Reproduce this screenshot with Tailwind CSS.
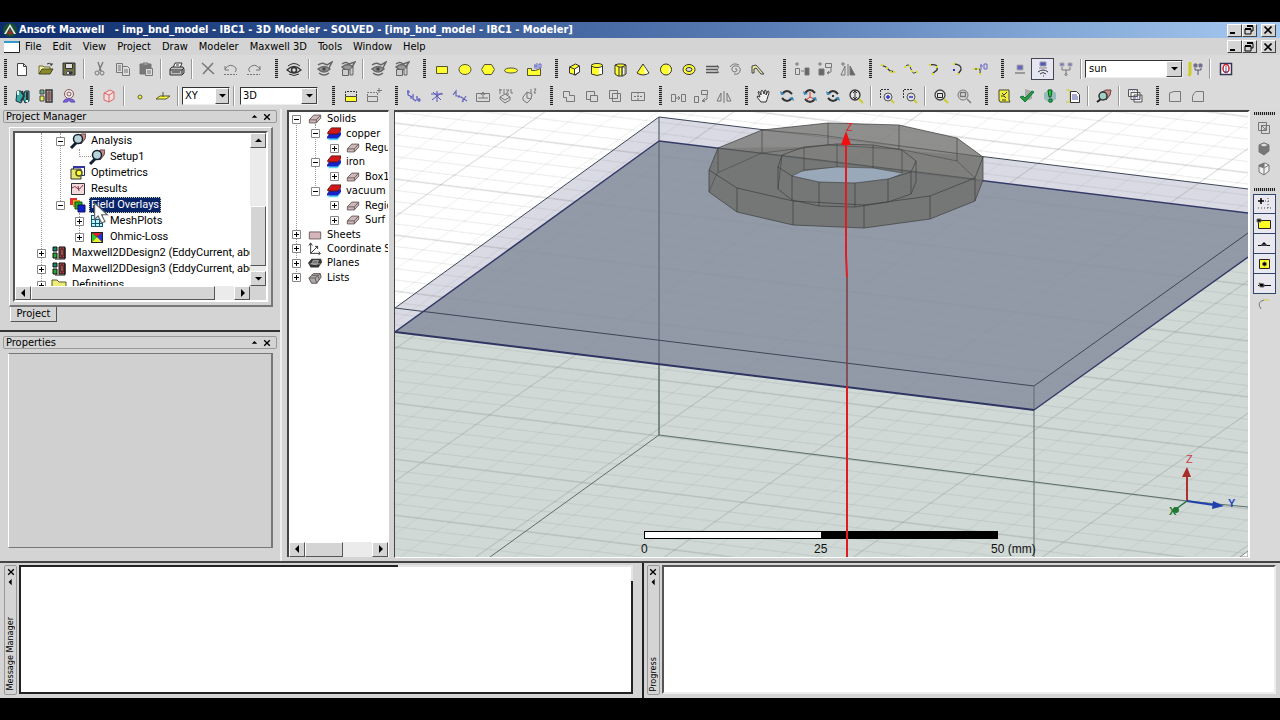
<!DOCTYPE html>
<html lang="en">
  <head>
    <meta charset="UTF-8" />
    <meta name="viewport" content="width=device-width, initial-scale=1.0" />
    <title>Ansoft Maxwell - imp_bnd_model</title>
    <script src="https://cdn.jsdelivr.net/npm/@tailwindcss/browser@4"></script>
  </head>
  <body class="bg-black h-screen flex flex-col overflow-hidden text-black text-[11px] leading-4 font-['DejaVu_Sans_Condensed','DejaVu_Sans',sans-serif]">
    <!-- shared icons -->
    <svg class="hidden">
      <symbol id="plus" viewBox="0 0 9 9"><path d="M.5 .5h8v8h-8z" fill="#fff" stroke="#888" /><path d="M2 4.500h5M4.500 2v5" stroke="#000" /></symbol>
      <symbol id="minus" viewBox="0 0 9 9"><path d="M.5 .5h8v8h-8z" fill="#fff" stroke="#888" /><path d="M2 4.500h5" stroke="#000" /></symbol>
      <symbol id="lens" viewBox="0 0 16 16"><path d="M7 5l4-4h5l-1 5-4 5z" fill="#c98f88" stroke="#644" /><path d="M6 10l-5 5" stroke="#123" stroke-width="3" /><circle cx="8" cy="6" r="4.500" fill="#b9d4d8" stroke="#123" stroke-width="1.500" /></symbol>
      <symbol id="ringlens" viewBox="0 0 16 16"><path d="M6 4l4-2h5l-1 5-4 5z" fill="#c98f88" stroke="#644" /><path d="M5 11l-4 3" stroke="#222" stroke-width="2" /><circle cx="7" cy="8" r="4" fill="#9fd0c8" stroke="#333" stroke-width="1.500" /></symbol>
      <symbol id="design" viewBox="0 0 16 16"><path d="M2 2h4v4H2z" fill="#186" stroke="#111" /><path d="M2 8h4v5H2z" fill="#2a3" stroke="#111" /><path d="M8 2h6v11H8z" fill="#a44" stroke="#111" /><path d="M10 4h2v7h-2z" fill="#d99" stroke="#311" /><path d="M14 3v11H4" stroke="#111" fill="none" /></symbol>
      <symbol id="designgray" viewBox="0 0 16 16"><path d="M2 2h4v4H2z" fill="#6a8" stroke="#444" /><path d="M2 8h4v5H2z" fill="#ee5" stroke="#444" /><path d="M8 2h6v12H8z" fill="#b9a8a4" stroke="#333" stroke-width="1.500" /><path d="M10 4h2v8h-2z" fill="#a77" stroke="#644" /></symbol>
      <symbol id="box" viewBox="0 0 16 16"><path d="M1.500 9l5-5.500h8V7l-5 5.500h-8z" fill="#cdb9b9" stroke="#655" /><path d="M1.500 9h8v3.500M9.500 9l5-5.500" fill="none" stroke="#655" /></symbol>
      <symbol id="mat" viewBox="0 0 16 16"><path d="M1 15l4-5h11l-4 5z" fill="#5cd8f0" /><path d="M0 11l4-5h12v3l-4 4H0z" fill="#1522c8" /><path d="M1 6l4-5h11v3l-4 4H1z" fill="#d01818" stroke="#511" /></symbol>
      <symbol id="min" viewBox="0 0 12 10"><path d="M2 8h5" stroke="#000" stroke-width="2" /></symbol>
      <symbol id="restore" viewBox="0 0 12 10"><path d="M4 1.500h6V6H8M2 4h6v5H2z" fill="none" stroke="#000" /><path d="M4 1h6M2 4h6" stroke="#000" stroke-width="2" /></symbol>
      <symbol id="close" viewBox="0 0 12 10"><path d="M2.500 1.500l7 7M9.500 1.500l-7 7" stroke="#000" stroke-width="1.700" /></symbol>
      <symbol id="eye" viewBox="0 0 16 16"><path d="M1 9q7-7 14 0q-7 6-14 0z" fill="#ddd" stroke="#333" stroke-width="1.300" /><circle cx="8" cy="9" r="2.500" fill="none" stroke="#333" stroke-width="1.500" /><path d="M2 5q6-5 12 0M3 13q5 3 10 0" fill="none" stroke="#333" /></symbol>
      <symbol id="eyex" viewBox="0 0 16 16"><path d="M1 8q6-5 12 0q-6 6-12 0z" fill="#999" stroke="#666" stroke-width="1.500" /><circle cx="7" cy="8" r="2" fill="#444" /><path d="M1 4q4-3 7-1l2 1 5-3-3 6M2 12q5 4 10 0" fill="none" stroke="#666" stroke-width="1.500" /></symbol>
      <symbol id="eyebox" viewBox="0 0 16 16"><path d="M2 6q6-5 11 0q-5 6-11 0z" fill="#999" stroke="#666" stroke-width="1.500" /><path d="M2 3q4-3 7 0l6-2-3 5" fill="none" stroke="#666" stroke-width="1.500" /><path d="M2.500 8.500h6v6h-6zM10 8v6h3V7" fill="#ccc" stroke="#666" /></symbol>
      <symbol id="up" viewBox="0 0 9 9"><path d="M1 6h7L4.500 2.500z" /></symbol>
      <symbol id="down" viewBox="0 0 9 9"><path d="M1 3h7L4.500 6.500z" /></symbol>
      <symbol id="left" viewBox="0 0 9 9"><path d="M6 0v8L2 4z" /></symbol>
      <symbol id="right" viewBox="0 0 9 9"><path d="M3 0v8l4-4z" /></symbol>
    </svg>

    <main class="mt-[22px] mb-[22px] flex-1 min-h-0 flex flex-col bg-[#d4d4d4]">
      <!-- title bar -->
      <header class="h-4 shrink-0 flex items-center gap-[2px] pl-[3px] pr-1 text-white bg-linear-to-r from-[#0e2d6e] via-[#5a7db5] via-60% to-[#a6caf0]">
        <svg class="w-[14px] h-[14px]" viewBox="0 0 14 14"><circle cx="7" cy="7" r="7" fill="#174f35" /><path d="M7 1l6 10h-2L7 4l-4 7H1z" fill="#e8eee8" /><path d="M5 11V9M7 12V6M9 11V9" stroke="#d22" stroke-width="1.200" /></svg>
        <h1 class="flex-1 whitespace-pre font-bold">Ansoft Maxwell   - imp_bnd_model - IBC1 - 3D Modeler - SOLVED - [imp_bnd_model - IBC1 - Modeler]</h1>
        <div class="flex [&>button]:w-[15px] [&>button]:h-[13px] [&>button]:bg-[#d4d4d4] [&>button]:border [&>button]:border-white [&>button]:border-r-[#444] [&>button]:border-b-[#444] [&_svg]:w-3 [&_svg]:h-[10px]">
          <button aria-label="Minimize"><svg><use href="#min" /></svg></button>
          <button aria-label="Restore"><svg><use href="#restore" /></svg></button>
          <button class="ml-1" aria-label="Close"><svg><use href="#close" /></svg></button>
        </div>
      </header>

      <!-- menu -->
      <nav class="h-[17px] shrink-0 flex items-center pl-1 pr-1">
        <svg class="w-4 h-3 mr-[5px]" viewBox="0 0 16 12"><path d="M0 0h16v12H0z" fill="#fff" /><path d="M0 1h16" stroke="#39c" stroke-width="2" /><path d="M15.500 0v11.500H0" fill="none" stroke="#222" /></svg>
        <div class="flex-1 flex gap-[11px]">
          <button>File</button><button>Edit</button><button>View</button><button>Project</button><button>Draw</button><button>Modeler</button><button>Maxwell 3D</button><button>Tools</button><button>Window</button><button>Help</button>
        </div>
        <div class="flex [&>button]:w-[15px] [&>button]:h-[13px] [&>button]:bg-[#d4d4d4] [&>button]:border [&>button]:border-white [&>button]:border-r-[#444] [&>button]:border-b-[#444] [&_svg]:w-3 [&_svg]:h-[10px]">
          <button aria-label="Minimize window"><svg><use href="#min" /></svg></button>
          <button aria-label="Restore window"><svg><use href="#restore" /></svg></button>
          <button class="ml-1" aria-label="Close window"><svg><use href="#close" /></svg></button>
        </div>
      </nav>

      <!-- toolbars: i is a grip, hr a separator -->
      <div class="shrink-0 bg-[#dadada] flex flex-col [&>div]:h-[27px] [&>div]:flex [&>div]:gap-[10px] [&>div]:pl-1 [&>div>div]:flex [&>div>div]:items-center [&_button]:w-[23px] [&_button]:h-[22px] [&_button]:flex [&_button]:items-center [&_button]:justify-center [&_button>svg]:size-4 [&_button>svg]:fill-none [&_button>svg]:stroke-[#777] [&_i]:w-[3px] [&_i]:h-[19px] [&_i]:mr-1 [&_i]:bg-[repeating-linear-gradient(#222_0_1px,#bbb_1px_2px)] [&_hr]:w-0 [&_hr]:h-5 [&_hr]:mx-[3px] [&_hr]:border-0 [&_hr]:border-l [&_hr]:border-r [&_hr]:border-l-[#999] [&_hr]:border-r-white [&_hr]:box-content">
        <div>
          <div>
            <i></i>
            <button aria-label="New"><svg viewBox="0 0 16 16"><path d="M2.500 2.500h6l3 3v9h-9z" fill="#fff" stroke="#444" /><path d="M8.500 2.500v3h3" stroke="#444" /></svg></button>
            <button aria-label="Open"><svg viewBox="0 0 16 16"><path d="M1 13V5h4l1 1h6v2" fill="#f5f3a0" stroke="#663" /><path d="M1 13l3-5h11l-3 5z" fill="#8a8a28" stroke="#442" /><path d="M9 3q3-2 5 1m0-2v2h-2" stroke="#333" /></svg></button>
            <button aria-label="Save"><svg viewBox="0 0 16 16"><path d="M2 2h12v12H2z" fill="#6f7038" stroke="#333" /><path d="M4.500 2.500h7v5h-7z" fill="#ddd" stroke="#333" /><path d="M5 10h7v4H5z" fill="#333" /><path d="M6 11h2v2H6z" fill="#ddd" stroke="none" /></svg></button>
            <hr />
            <button aria-label="Cut"><svg viewBox="0 0 16 16"><path d="M6 1l3 9M11 1L7 10" stroke-width="1.300" /><circle cx="5" cy="12" r="2" /><circle cx="10" cy="12" r="2" /></svg></button>
            <button aria-label="Copy"><svg viewBox="0 0 16 16"><path d="M1.500 2.500h6v9h-6zM3 5h3M3 7h3M3 9h3" /><path d="M7.500 5.500h5l2 2v7h-7z" fill="#ddd" /><path d="M9 9h4M9 11h4" /></svg></button>
            <button aria-label="Paste"><svg viewBox="0 0 16 16"><path d="M2 3h11v10H2z" fill="#777" /><path d="M5 2h5v2H5z" fill="#bbb" /><path d="M7.500 7.500h7v7h-7z" fill="#ddd" /><path d="M9 10h4M9 12h4" /></svg></button>
            <hr />
            <button aria-label="Print"><svg viewBox="0 0 16 16"><path d="M4 7l2-5h7l-2 5z" fill="#fff" stroke="#333" /><path d="M1 8l2-2h11l1 2v4l-2 2H1z" fill="#bbb" stroke="#333" /><path d="M1 9h12v4M3 11h8M13 9l2-2M7 4h3" stroke="#333" /></svg></button>
            <hr />
            <button aria-label="Delete"><svg viewBox="0 0 16 16"><path d="M2 2l12 11M13 2L3 13" stroke-width="1.500" /></svg></button>
            <button aria-label="Undo"><svg viewBox="0 0 16 16"><path d="M2 9V5m0 4h4M2 8q5-7 11-1q1 2-1 4" /><path d="M1 13.500h13" stroke-dasharray="2 1" /></svg></button>
            <button aria-label="Redo"><svg viewBox="0 0 16 16"><path d="M14 9V5m0 4h-4M14 8Q9 1 3 7q-1 2 1 4" /><path d="M1 13.500h13" stroke-dasharray="2 1" /></svg></button>
          </div>
          <div>
            <i></i>
            <button aria-label="Show all"><svg><use href="#eye" /></svg></button>
            <hr />
            <button aria-label="Hide selected"><svg><use href="#eyex" /></svg></button>
            <button aria-label="Hide in active view"><svg><use href="#eyebox" /></svg></button>
            <hr />
            <button aria-label="Show selected"><svg><use href="#eyex" /></svg></button>
            <button aria-label="Show in active view"><svg><use href="#eyebox" /></svg></button>
          </div>
          <div>
            <i></i>
            <button aria-label="Rectangle"><svg viewBox="0 0 16 16"><path d="M2.500 5.500h11v7h-11z" fill="#ffff30" stroke="#553" /></svg></button>
            <button aria-label="Circle"><svg viewBox="0 0 16 16"><ellipse cx="8" cy="8.500" rx="6" ry="5" fill="#ffff30" stroke="#553" /></svg></button>
            <button aria-label="Polygon"><svg viewBox="0 0 16 16"><path d="M1.500 8.500l3-5h7l3 5-3 5h-7z" fill="#ffff30" stroke="#553" /></svg></button>
            <button aria-label="Ellipse"><svg viewBox="0 0 16 16"><ellipse cx="8" cy="9.500" rx="6.500" ry="2.500" fill="#ffff30" stroke="#553" /></svg></button>
            <button aria-label="Equation surface"><svg viewBox="0 0 16 16"><path d="M1.500 7.500h4v2h4l5-2v7h-13z" fill="#ffff30" stroke="#553" /><path d="M9 3v5M8 5h3M11 2v6M13 3v4h2V3z" stroke="#66c" /></svg></button>
          </div>
          <div class="mr-1">
            <i></i>
            <button aria-label="Box"><svg viewBox="0 0 16 16"><path d="M3.500 6l6-3 4 2v6l-4 3-6-2z" fill="#ffff30" stroke="#333" /><path d="M8.500 8l5-3v6l-5 3z" fill="#fff" stroke="#333" /><path d="M3.500 6l5 2" stroke="#333" /></svg></button>
            <button aria-label="Cylinder"><svg viewBox="0 0 16 16"><path d="M2.500 4v9q5.500 3 11 0V4z" fill="#ffff30" stroke="#333" /><path d="M10 5h3v8h-3z" fill="#fff" stroke="none" /><ellipse cx="8" cy="4.500" rx="5.500" ry="2" fill="#ffff30" stroke="#333" /></svg></button>
            <button aria-label="Regular polyhedron"><svg viewBox="0 0 16 16"><path d="M3 4l3-1h5l3 1v9l-3 2H6l-3-2z" fill="#ffff30" stroke="#333" /><path d="M10 6h3v7l-3 2z" fill="#eee" /><path d="M3 4l4 2h3l4-2M7 6v9M10 6v9" stroke="#333" /></svg></button>
            <button aria-label="Cone"><svg viewBox="0 0 16 16"><path d="M8 3l6 9q-6 4-12 0z" fill="#ffff30" stroke="#333" /><path d="M9 5l4 7-3 1z" fill="#fff" stroke="none" /></svg></button>
            <button aria-label="Sphere"><svg viewBox="0 0 16 16"><circle cx="8" cy="8.500" r="5.500" fill="#ffff30" stroke="#333" /><path d="M10 5q3 4-1 8q6-3 1-8" fill="#fff" stroke="none" /></svg></button>
            <button aria-label="Torus"><svg viewBox="0 0 16 16"><ellipse cx="8" cy="8.500" rx="6" ry="5" fill="#ffff30" stroke="#333" /><ellipse cx="8" cy="8.500" rx="3" ry="2" fill="#ddd" stroke="#333" /></svg></button>
            <button aria-label="Helix"><svg viewBox="0 0 16 16"><path d="M2 5.500h12M2 8.500h12M2 11.500h12" stroke="#555" stroke-width="1.500" /><path d="M13 4l2 2-2 3 2 3" stroke="#777" /></svg></button>
            <button aria-label="Spiral"><svg viewBox="0 0 16 16"><path d="M8 8q2-1 2 1t-3 2q-3-1-2-4t5-2q4 1 3 5t-6 3M3 6q3-5 9-2" /></svg></button>
            <button aria-label="Bondwire"><svg viewBox="0 0 16 16"><path d="M2 12V5l4-1 8 9h-3L6 7l-2 1v4z" fill="#e8e8a0" stroke="#444" /></svg></button>
          </div>
          <div>
            <i></i>
            <button aria-label="Duplicate along line"><svg viewBox="0 0 16 16"><path d="M3 1v4M1 3h4M1.500 7.500h4v6h-4zM7 10h3" /><path d="M11 7h4v7h-4z" fill="#666" /></svg></button>
            <button aria-label="Duplicate around axis"><svg viewBox="0 0 16 16"><path d="M3 1v4M1 3h4M8.500 2.500h6v4h-6zM14 7v4l-4 1m2-2l-2 2 2 1" /><path d="M2 8h5v6H2z" fill="#666" /></svg></button>
            <button aria-label="Duplicate mirror"><svg viewBox="0 0 16 16"><path d="M3 1v4M1 3h4M5 5v9H1zM8 3v12" /><path d="M10 5v9h5z" fill="#666" /></svg></button>
          </div>
          <div>
            <i></i>
            <button aria-label="Line"><svg viewBox="0 0 16 16"><path d="M1 4l5 2 4 4 5 1" stroke="#333" stroke-width="1.300" /><path d="M1 4h2M6 7h2M10 11h2M13 11h2" stroke="#dd2" stroke-width="2" /></svg></button>
            <button aria-label="Spline"><svg viewBox="0 0 16 16"><path d="M2 6q4-5 6 2t6 2" stroke="#333" /><path d="M1 6h2M6 5h2M8 10h2M13 11h2" stroke="#dd2" stroke-width="2" /></svg></button>
            <button aria-label="Arc by three points"><svg viewBox="0 0 16 16"><path d="M3 4q10-2 8 5l-5 4" stroke="#333" stroke-width="1.300" /><path d="M3 4h2M10 6h2M6 13h2" stroke="#dd2" stroke-width="2" /></svg></button>
            <button aria-label="Arc by center"><svg viewBox="0 0 16 16"><path d="M4 3q9 0 8 6l-3 4" stroke="#333" stroke-width="1.300" /><path d="M4 3h2M8 13h2" stroke="#dd2" stroke-width="2" /><path d="M4 9h2" stroke="#33c" stroke-width="2" /></svg></button>
            <button aria-label="Equation curve"><svg viewBox="0 0 16 16"><path d="M1 8h4q4-2 3 5" stroke="#333" /><path d="M1 8h2M5 8h2M7 13h2" stroke="#dd2" stroke-width="2" /><path d="M9 3v6M8 5h3M12 3v5h3V3z" stroke="#66c" /></svg></button>
          </div>
          <div>
            <i></i>
            <button aria-label="Local machine"><svg viewBox="0 0 16 16"><path d="M5 4h6v5H5z" fill="#66b" stroke="#aaa" /><path d="M3 12h10" stroke="#999" stroke-width="2" /></svg></button>
            <button class="border border-[#445] bg-[#e6e6f0]" aria-label="Remote machine"><svg viewBox="0 0 16 16"><path d="M5 1h6v4H5z" fill="#55b" stroke="#99a" /><path d="M4 7h8" stroke="#888" /><path d="M3 11q5-4 10 0M5 13q3-3 6 0M8 15h1" stroke="#334" /></svg></button>
            <button aria-label="Distributed machines"><svg viewBox="0 0 16 16"><path d="M2 2h4v3H2zM10 2h4v3h-4z" fill="#77b" stroke="#aaa" /><path d="M4 6v3h8V6M8 9v4" /><circle cx="8" cy="13.500" r="1" /></svg></button>
            <hr />
            <label class="relative block w-[98px] h-[18px]">
              <select aria-label="Machine" class="appearance-none block w-full h-full pl-[3px] bg-white border border-t-[#333] border-l-[#333] border-r-[#eee] border-b-[#eee] text-[11px] leading-4"><option>sun</option></select>
              <span class="absolute right-px top-px w-4 h-4 bg-[#d4d4d4] border border-t-white border-l-white border-r-[#444] border-b-[#444] pointer-events-none flex items-center justify-center"><svg class="w-[9px] h-[9px]"><use href="#down" /></svg></span>
            </label>
            <button aria-label="Edit machines"><svg viewBox="0 0 16 16"><path d="M3 1v11l-1 3" stroke="#cc2" stroke-width="3" /><path d="M7 3h3v3H7zM12 3h3v3h-3z" fill="#66b" /><path d="M8 7v2h6V7M11 9v5" stroke="#557" /></svg></button>
            <hr />
            <button aria-label="Stop"><svg viewBox="0 0 16 16"><path d="M2.500 2.500h11v11h-11z" fill="#fff" stroke="#335" stroke-width="1.500" /><ellipse cx="8" cy="7.500" rx="3" ry="4" stroke="#c22" stroke-width="1.500" /><path d="M8 5v6M6 11h4" stroke="#55a" /></svg></button>
          </div>
        </div>

        <div>
          <div>
            <i></i>
            <button aria-label="Find"><svg viewBox="0 0 16 16"><path d="M2 3h4l1 3h2l1-3h4v10l-4 2-2-5-2 5-5-2z" fill="#3aa" stroke="#234" /><path d="M7 3l2 5-3 5M12 4v8" stroke="#333" stroke-width="2" /><path d="M3 3v4M12 12v2" stroke="#dfe" stroke-width="2" /></svg></button>
            <button aria-label="Insert design"><svg><use href="#designgray" /></svg></button>
            <button aria-label="Solution type"><svg viewBox="0 0 16 16"><circle cx="8" cy="6" r="4.500" fill="#eee" stroke="#855" /><circle cx="8" cy="6" r="2" stroke="#855" /><path d="M2 14q2-4 5-3h2q4 0 5 3h-4q-2-3-4 0z" fill="#86e" stroke="#54a" /></svg></button>
          </div>
          <div>
            <i></i>
            <button aria-label="3D Modeler"><svg viewBox="0 0 16 16"><path d="M3 5l6-3 4 2v7l-5 3-5-2z" stroke="#d66" fill="#f0dede" /><path d="M3 5l5 2v7M8 7l5-3" stroke="#d66" /></svg></button>
            <hr />
            <button aria-label="Point"><svg viewBox="0 0 16 16"><circle cx="8" cy="9" r="2" fill="#ee4" stroke="#663" /></svg></button>
            <button aria-label="Plane"><svg viewBox="0 0 16 16"><path d="M1 11l4-3h10l-4 3z" fill="#ffff30" stroke="#553" /><path d="M8 9V4" stroke="#553" /></svg></button>
            <hr />
            <label class="relative block w-12 h-[18px]">
              <select aria-label="Drawing plane" class="appearance-none block w-full h-full pl-[2px] bg-white border border-t-[#333] border-l-[#333] border-r-[#eee] border-b-[#eee] text-[11px] leading-4"><option>XY</option></select>
              <span class="absolute right-px top-px w-[14px] h-4 bg-[#d4d4d4] border border-t-white border-l-white border-r-[#444] border-b-[#444] pointer-events-none flex items-center justify-center"><svg class="w-[9px] h-[9px]"><use href="#down" /></svg></span>
            </label>
            <hr />
            <label class="relative block w-[78px] h-[18px] ml-[2px]">
              <select aria-label="Movement mode" class="appearance-none block w-full h-full pl-[2px] bg-white border border-t-[#333] border-l-[#333] border-r-[#eee] border-b-[#eee] text-[11px] leading-4"><option>3D</option></select>
              <span class="absolute right-px top-px w-4 h-4 bg-[#d4d4d4] border border-t-white border-l-white border-r-[#444] border-b-[#444] pointer-events-none flex items-center justify-center"><svg class="w-[9px] h-[9px]"><use href="#down" /></svg></span>
            </label>
          </div>
          <div class="ml-1">
            <i></i>
            <button aria-label="Cover lines"><svg viewBox="0 0 16 16"><path d="M2.500 8.500h11v5h-11z" fill="#ffff30" stroke="#443" /><path d="M2.500 8V3.500h11V8" stroke="#333" stroke-dasharray="2 1" /></svg></button>
            <button aria-label="Uncover faces"><svg viewBox="0 0 16 16"><path d="M1.500 8.500h10v5h-10z" /><path d="M1.500 8V4.500H11M11.500 5v3" stroke-dasharray="2 1" /><path d="M13 0v5M11 2.500h5" /></svg></button>
          </div>
          <div>
            <i></i>
            <button aria-label="Relative CS offset"><svg viewBox="0 0 16 16"><path d="M2 2v5l4 2M1 4h3M7 6v5l3 2M11 8v4h4M13 10v4M4 10h2" stroke="#55b" stroke-width="1.200" /></svg></button>
            <button aria-label="Relative CS rotated"><svg viewBox="0 0 16 16"><path d="M8 3v11M2 6h12M4 4l8 8M3 12l5-4 5-3" stroke="#55b" /></svg></button>
            <button aria-label="Relative CS both"><svg viewBox="0 0 16 16"><path d="M1 7l3-4v5l4 0M6 9h4M9 9l6 4M10 14l4-6M11 10v4" stroke="#66b" stroke-width="1.200" /></svg></button>
            <button aria-label="Face CS"><svg viewBox="0 0 16 16"><path d="M1.500 5.500h13v8h-13zM3 10h10M8 6v4M6 7l2-3 2 3" /></svg></button>
            <button aria-label="Edge CS"><svg viewBox="0 0 16 16"><path d="M1 2h3M2 1v5M6 1v5M8 2h3l-3 4h3M13 1v4h2M2 9l5-3 5 3v3l-5 3-5-4zM2 9l5 3 5-3" /></svg></button>
            <button aria-label="Object CS"><svg viewBox="0 0 16 16"><path d="M2 9l4-5 5 2-1 5-4 4-4-3zM6 4v6l4 1M10 1v4M13 1h2l-2 4h2" /></svg></button>
          </div>
          <div>
            <i></i>
            <button aria-label="Unite"><svg viewBox="0 0 16 16"><path d="M2.500 3.500h6v4h5v6h-8v-4h-3z" /></svg></button>
            <button aria-label="Subtract"><svg viewBox="0 0 16 16"><path d="M2.500 3.500h8v4h-4v4h-4zM6.500 7.500h7v6h-7z" /></svg></button>
            <button aria-label="Intersect"><svg viewBox="0 0 16 16"><path d="M2.500 2.500h8v8h-8zM5.500 5.500h8v8h-8z" /></svg></button>
            <button aria-label="Split"><svg viewBox="0 0 16 16"><path d="M1.500 4.500h13v8h-13z" /><path d="M8 4v9M4 8.500h8" stroke-dasharray="2 1" /></svg></button>
          </div>
          <div>
            <i></i>
            <button aria-label="Move"><svg viewBox="0 0 16 16"><path d="M1.500 6.500h4v7h-4zM11.500 6.500h4v7h-4zM6 10h4M8 8l2 2-2 2" /></svg></button>
            <button aria-label="Rotate"><svg viewBox="0 0 16 16"><path d="M1.500 8.500h4v6h-4zM8.500 2.500h6v4h-6zM14 7v4l-4 2m2-3l-3 3 3 1" /></svg></button>
            <button aria-label="Mirror"><svg viewBox="0 0 16 16"><path d="M5 5v8H1zM8 3v12M11 5v8h4z" /></svg></button>
          </div>
          <div>
            <i></i>
            <button aria-label="Pan"><svg viewBox="0 0 16 16"><path d="M5 14L1 9q0-2 3 0L2 4q1-2 3 3L5 3q2-2 3 3l1-4q2 0 1 5l2-4q2 0 0 5-1 4-2 6z" fill="#eee" stroke="#333" /></svg></button>
            <button aria-label="Rotate model"><svg viewBox="0 0 16 16"><path d="M3 6q5-6 10 0M13 10q-5 6-10 0" stroke="#333" stroke-width="2" /><path d="M1 3l1 4 4-1zM15 13l-1-4-4 1z" fill="#38b" stroke="none" /></svg></button>
            <button aria-label="Rotate around axis"><svg viewBox="0 0 16 16"><path d="M3 5q5-6 10 0M13 11q-5 6-10 0" stroke="#333" stroke-width="2" /><path d="M8 4v5l-4 3M8 9l4 2" stroke="#d33" /><path d="M1 3l1 4 4-1zM15 13l-1-4-4 1z" fill="#38b" stroke="none" /></svg></button>
            <button aria-label="Rotate around center"><svg viewBox="0 0 16 16"><path d="M3 6q5-6 10 0M13 10q-5 6-10 0" stroke="#333" stroke-width="2" /><path d="M7 8h2" stroke="#333" stroke-width="2" /><path d="M1 3l1 4 4-1zM15 13l-1-4-4 1z" fill="#38b" stroke="none" /></svg></button>
            <button aria-label="Zoom"><svg viewBox="0 0 16 16"><circle cx="7" cy="7" r="5" fill="#e4e4e4" stroke="#333" stroke-width="1.300" /><path d="M7 4v6M5 5l2-2 2 2M5 9l2 2 2-2" stroke="#333" /><path d="M11 11l4 4" stroke="#cc3" stroke-width="2" /></svg></button>
            <hr />
            <button aria-label="Zoom in"><svg viewBox="0 0 16 16"><path d="M1.500 10V1.500H11" stroke="#333" stroke-dasharray="2 1" /><circle cx="9" cy="9" r="4" stroke="#555" fill="#ddd" /><path d="M7 9h4M9 7v4" stroke="#33c" stroke-width="1.500" /><path d="M12 12l3 3" stroke="#cc3" stroke-width="2" /></svg></button>
            <button aria-label="Zoom out"><svg viewBox="0 0 16 16"><path d="M1.500 10V1.500H11" stroke="#333" stroke-dasharray="2 1" /><circle cx="9" cy="9" r="4" stroke="#555" fill="#ddd" /><path d="M7 9h4" stroke="#33c" stroke-width="1.500" /><path d="M12 12l3 3" stroke="#cc3" stroke-width="2" /></svg></button>
            <hr />
            <button aria-label="Fit all"><svg viewBox="0 0 16 16"><circle cx="7" cy="7" r="5" fill="#e4e4e4" stroke="#444" stroke-width="1.300" /><path d="M4.500 5.500h5v4h-5z" stroke="#222" /><path d="M11 11l4 4" stroke="#cc3" stroke-width="2" /></svg></button>
            <button aria-label="Fit selection"><svg viewBox="0 0 16 16"><circle cx="7" cy="7" r="5" /><path d="M4.500 4.500h5v4h-5zM11 11l4 4" stroke-width="1.300" /></svg></button>
          </div>
          <div>
            <i></i>
            <button aria-label="Notes"><svg viewBox="0 0 16 16"><path d="M3 2h10v10l1 2H4l-1-2z" fill="#f0f03c" stroke="#443" /><path d="M6 5l2 2 3-3M5 8h3l2 2M6 12h4" stroke="#333" /></svg></button>
            <button aria-label="Validate"><svg viewBox="0 0 16 16"><path d="M6 1l7 2v8l-7 2z" fill="#aaa" stroke="none" /><path d="M1 9l3-1 2 2 7-7 2 1-9 10z" fill="#2b9a3c" stroke="#174" /></svg></button>
            <button aria-label="Analyze all"><svg viewBox="0 0 16 16"><path d="M2 5l6-4 6 4v6l-6 4-6-4z" fill="#9bb" stroke="none" /><path d="M6 2h4l-1 7H7zM7 11h3v3H7z" fill="#2c3" stroke="#153" /></svg></button>
            <button aria-label="Reports"><svg viewBox="0 0 16 16"><path d="M1 2h4v12H1" stroke="#cc3" /><path d="M5.500 3.500h6l3 3v8h-9z" fill="#fff" stroke="#333" /><path d="M7 7h5M7 9h6M7 11h6" stroke="#55a" /></svg></button>
            <hr />
            <button aria-label="Solution data"><svg><use href="#ringlens" /></svg></button>
            <hr />
            <button aria-label="Cascade"><svg viewBox="0 0 16 16"><path d="M1.500 1.500h9v7h-9zM4 4.500h9v7H4zM7 7h8v7H7z" fill="#eee" stroke="#555" /><path d="M8 9h6M8 11h6M1 2h9" stroke="#66a" stroke-dasharray="1 1" /></svg></button>
          </div>
          <div>
            <i></i>
            <button aria-label="Fillet"><svg viewBox="0 0 16 16"><path d="M2.500 13.500h11v-10H7L2.500 5z" /></svg></button>
            <button aria-label="Chamfer"><svg viewBox="0 0 16 16"><path d="M2.500 13.500h11v-10H6q-3 2-3.500 5z" /></svg></button>
          </div>
        </div>
      </div>

      <!-- docked panels and model window -->
      <div class="flex-1 min-h-0 flex">
        <aside class="w-[282px] shrink-0 flex flex-col border-r-2 border-[#eee] pt-px">
          <section class="h-[222px] flex flex-col border-b-2 border-[#333]">
            <h2 class="mx-[3px] h-[13px] pl-[2px] pr-1 border border-[#999] rounded-xs flex items-center leading-3">
              <span class="flex-1">Project Manager</span>
              <button class="mr-1" aria-label="Collapse"><svg class="w-[7px] h-[7px]"><use href="#up" /></svg></button>
              <button aria-label="Close panel"><svg class="w-[10px] h-2"><use href="#close" /></svg></button>
            </h2>
            <div class="mt-1 ml-[9px] mr-[7px] h-[180px] p-[3px] border border-white border-r-2 border-b-2 border-r-[#777] border-b-[#777]">
              <div class="h-full border-2 border-[#555] border-r-white border-b-white flex flex-col bg-[#d4d4d4]">
                <div class="flex-1 min-h-0 flex">
                  <div class="relative flex-1 min-w-0 overflow-hidden bg-white">
                    <span class="absolute left-[26px] top-0 h-40 border-l border-dotted border-[#999]"></span>
                    <span class="absolute left-[45px] top-0 h-[72px] border-l border-dotted border-[#999]"></span>
                    <span class="absolute left-[64px] top-4 h-2 w-4 border-l border-b border-dotted border-[#999]"></span>
                    <span class="absolute left-[64px] top-20 h-[26px] border-l border-dotted border-[#999]"></span>
                    <ul class="font-[Roboto,'Liberation_Sans',sans-serif] [&>li]:relative [&>li]:h-4 [&>li]:flex [&>li]:items-center [&>li]:gap-[5px] [&>li]:whitespace-nowrap [&_svg]:shrink-0">
                      <li class="pl-[41px]"><svg class="w-[9px] h-[9px]"><use href="#minus" /></svg><svg class="size-4"><use href="#lens" /></svg>Analysis</li>
                      <li class="pl-[74px]"><svg class="size-4"><use href="#lens" /></svg>Setup1</li>
                      <li class="pl-[55px]"><svg class="size-4" viewBox="0 0 16 16"><path d="M3.500 1.500h11v9h-11z" fill="#fff" stroke="#226" /><path d="M1 4h10v10H1z" fill="#e8e86a" stroke="#333" /><circle cx="9" cy="8" r="3" fill="#ff3" stroke="#552" stroke-width="1.500" /><path d="M3 2h12" stroke="#33a" stroke-width="2" /></svg>Optimetrics</li>
                      <li class="pl-[55px]"><svg class="size-4" viewBox="0 0 16 16"><path d="M1.500 2.500h13v11h-13z" fill="#f3d8dc" stroke="#333" /><path d="M2 7q3-3 5 0t6-3M8 5l1 5" fill="none" stroke="#834" /></svg>Results</li>
                      <li class="pl-[41px]"><svg class="w-[9px] h-[9px]"><use href="#minus" /></svg><svg class="size-4" viewBox="0 0 16 16"><path d="M0 1h7v7H0z" fill="#d33" /><path d="M3 3h7v7H3z" fill="#e8a020" /><path d="M5 5h7v7H5z" fill="#2a2" stroke="#151" /><path d="M8 8h7v7H8z" fill="#12c" stroke="#115" /></svg><span class="-ml-[2px] px-[2px] bg-[#0a246a] text-white outline outline-dotted outline-[#cc9] -outline-offset-1">Field Overlays</span></li>
                      <li class="pl-[60px]"><svg class="w-[9px] h-[9px]"><use href="#plus" /></svg><svg class="size-4" viewBox="0 0 16 16"><path d="M2 2h12v12H2z" fill="#bff4f4" /><path d="M2 2.500h12M2 6.500h12M2 10.500h12M2 13.500h12M2.500 2v12M6.500 2v12M10.500 2v12M13.500 2v12" stroke="#157" /></svg>MeshPlots</li>
                      <li class="pl-[60px]"><svg class="w-[9px] h-[9px]"><use href="#plus" /></svg><svg class="size-4" viewBox="0 0 16 16"><path d="M2 3h12v11H2z" fill="#222" /><path d="M3 4l5 4-5 5z" fill="#2c3" /><path d="M3 4h10L8 8z" fill="#d22" /><path d="M13 4v9L8 8z" fill="#23d" /><path d="M3 13h10L8 8z" fill="#ee3" /></svg>Ohmic-Loss</li>
                      <li class="pl-[22px]"><svg class="w-[9px] h-[9px]"><use href="#plus" /></svg><svg class="size-4"><use href="#design" /></svg>Maxwell2DDesign2 (EddyCurrent, abc</li>
                      <li class="pl-[22px]"><svg class="w-[9px] h-[9px]"><use href="#plus" /></svg><svg class="size-4"><use href="#design" /></svg>Maxwell2DDesign3 (EddyCurrent, abc</li>
                      <li class="pl-[22px]"><svg class="w-[9px] h-[9px]"><use href="#plus" /></svg><svg class="size-4" viewBox="0 0 16 16"><path d="M1 3h5l2 2h7v10H1z" fill="#f0ec78" stroke="#553" /></svg>Definitions</li>
                    </ul>
                    <svg class="absolute left-[78px] top-[69px] w-4 h-[22px]" viewBox="0 0 13 19"><path d="M1 1v14l3-3 3 6 3-1-3-6h5z" fill="#fff" stroke="#666" /></svg>
                  </div>
                  <div class="w-4 flex flex-col bg-[#ebebeb] [&>*]:bg-[#d4d4d4] [&>*]:border [&>*]:border-white [&>*]:border-r-[#555] [&>*]:border-b-[#555] [&>button]:h-[15px] [&>button]:flex [&>button]:items-center [&>button]:justify-center">
                    <button aria-label="Scroll up"><svg class="w-[9px] h-[9px]"><use href="#up" /></svg></button>
                    <div class="mt-auto h-[60px] mb-[5px]"></div>
                    <button aria-label="Scroll down"><svg class="w-[9px] h-[9px]"><use href="#down" /></svg></button>
                  </div>
                </div>
                <div class="h-[14px] mr-4 flex bg-[#ebebeb] [&>*]:bg-[#d4d4d4] [&>*]:border [&>*]:border-white [&>*]:border-r-[#555] [&>*]:border-b-[#555] [&>button]:w-4 [&>button]:flex [&>button]:items-center [&>button]:justify-center">
                  <button aria-label="Scroll left"><svg class="w-[9px] h-[9px]"><use href="#left" /></svg></button>
                  <div class="w-[184px]"></div>
                  <button class="ml-auto" aria-label="Scroll right"><svg class="w-[9px] h-[9px]"><use href="#right" /></svg></button>
                </div>
              </div>
            </div>
            <div><button class="block ml-[10px] w-[47px] h-[15px] leading-[14px] border-r border-b border-l border-l-white border-[#555]">Project</button></div>
          </section>
          <section class="flex-1 flex flex-col pt-1">
            <h2 class="mx-[3px] h-[13px] pl-[2px] pr-1 border border-[#999] rounded-xs flex items-center leading-3">
              <span class="flex-1">Properties</span>
              <button class="mr-1" aria-label="Collapse properties"><svg class="w-[7px] h-[7px]"><use href="#up" /></svg></button>
              <button aria-label="Close properties"><svg class="w-[10px] h-2"><use href="#close" /></svg></button>
            </h2>
            <div class="flex-1 mt-1 ml-2 mr-[7px] mb-[13px] bg-[#d0d0d0] border border-[#777] border-l-white border-r-2"></div>
          </section>
        </aside>

        <section class="w-[102px] shrink-0 ml-[5px] mt-px mb-1 flex flex-col bg-white border-l-2 border-t-2 border-[#444] border-r border-r-white">
          <div class="relative">
            <span class="absolute left-[7px] top-2 h-40 border-l border-dotted border-[#999]"></span>
            <span class="absolute left-[26px] top-3 h-[68px] border-l border-dotted border-[#999]"></span>
            <ul class="h-[173px] grid grid-rows-12 overflow-hidden [&>li]:relative [&>li]:flex [&>li]:items-center [&>li]:gap-[5px] [&>li]:whitespace-nowrap [&>li]:leading-[14px] [&_svg]:shrink-0">
              <li class="pl-[3px]"><svg class="w-[9px] h-[9px]"><use href="#minus" /></svg><svg class="ml-[2px] w-[14px] h-[14px]"><use href="#box" /></svg>Solids</li>
              <li class="pl-[22px]"><svg class="w-[9px] h-[9px]"><use href="#minus" /></svg><svg class="ml-[2px] w-[14px] h-[14px]"><use href="#mat" /></svg>copper</li>
              <li class="pl-[41px]"><svg class="w-[9px] h-[9px]"><use href="#plus" /></svg><svg class="ml-[2px] w-[14px] h-[14px]"><use href="#box" /></svg>Regu</li>
              <li class="pl-[22px]"><svg class="w-[9px] h-[9px]"><use href="#minus" /></svg><svg class="ml-[2px] w-[14px] h-[14px]"><use href="#mat" /></svg>iron</li>
              <li class="pl-[41px]"><svg class="w-[9px] h-[9px]"><use href="#plus" /></svg><svg class="ml-[2px] w-[14px] h-[14px]"><use href="#box" /></svg>Box1</li>
              <li class="pl-[22px]"><svg class="w-[9px] h-[9px]"><use href="#minus" /></svg><svg class="ml-[2px] w-[14px] h-[14px]"><use href="#mat" /></svg>vacuum</li>
              <li class="pl-[41px]"><svg class="w-[9px] h-[9px]"><use href="#plus" /></svg><svg class="ml-[2px] w-[14px] h-[14px]"><use href="#box" /></svg>Region</li>
              <li class="pl-[41px]"><svg class="w-[9px] h-[9px]"><use href="#plus" /></svg><svg class="ml-[2px] w-[14px] h-[14px]"><use href="#box" /></svg>Surf</li>
              <li class="pl-[3px]"><svg class="w-[9px] h-[9px]"><use href="#plus" /></svg><svg class="ml-[2px] w-[14px] h-[14px]" viewBox="0 0 16 16"><path d="M1.500 4.500h13v8h-13z" fill="#d6b4bc" stroke="#655" /></svg>Sheets</li>
              <li class="pl-[3px]"><svg class="w-[9px] h-[9px]"><use href="#plus" /></svg><svg class="ml-[2px] w-[14px] h-[14px]" viewBox="0 0 16 16"><path d="M3 2v11h11M3 13l8-8M1 4l2-3 2 3M8 5h3v3M12 11l2 2-2 2" fill="none" stroke="#222" /></svg>Coordinate Systems</li>
              <li class="pl-[3px]"><svg class="w-[9px] h-[9px]"><use href="#plus" /></svg><svg class="ml-[2px] w-[14px] h-[14px]" viewBox="0 0 16 16"><path d="M0 8l4-5h11l1 4-4 6H3z" fill="#333" /><path d="M4 9l2-4h6l-2 5zM2 9h12" fill="#777" stroke="#aaa" /></svg>Planes</li>
              <li class="pl-[3px]"><svg class="w-[9px] h-[9px]"><use href="#plus" /></svg><svg class="ml-[2px] w-[14px] h-[14px]" viewBox="0 0 16 16"><path d="M1 8l5-5h8l1 4-5 7H4z" fill="#aaa" stroke="#544" /><path d="M1 8h7l2 6M8 8l6-5M4 5h7l2 5" fill="none" stroke="#655" /></svg>Lists</li>
            </ul>
          </div>
          <div class="mt-auto h-[15px] flex bg-[#ebebeb] [&>*]:bg-[#d4d4d4] [&>*]:border [&>*]:border-white [&>*]:border-r-[#555] [&>*]:border-b-[#555] [&>button]:w-4 [&>button]:flex [&>button]:items-center [&>button]:justify-center">
            <button aria-label="Scroll history left"><svg class="w-[9px] h-[9px]"><use href="#left" /></svg></button>
            <div class="w-[38px]"></div>
            <button class="ml-auto" aria-label="Scroll history right"><svg class="w-[9px] h-[9px]"><use href="#right" /></svg></button>
          </div>
        </section>

        <!-- model view -->
        <section class="flex-1 min-w-0 ml-[5px] mt-px mb-[3px] border-l border-t-2 border-[#444] border-r-2 border-r-white border-b border-b-white bg-white">
          <svg class="block w-full h-full" viewBox="395 112 853 445" preserveAspectRatio="xMidYMid slice" fill="none">
            <defs>
              <pattern id="grid" width="100" height="100" patternUnits="userSpaceOnUse" patternTransform="matrix(1.605 .199 -.68 .476 462.400 103.400)">
                <path d="M0 10h100M0 30h100M0 70h100M0 90h100" stroke="#6b7070" stroke-opacity=".13" stroke-width="2" />
                <path d="M10 0v100M30 0v100M70 0v100M90 0v100" stroke="#6b7070" stroke-opacity=".1" stroke-width=".8" />
                <path d="M0 50h100" stroke="#6b7070" stroke-opacity=".22" stroke-width="3" />
                <path d="M50 0v100" stroke="#6b7070" stroke-opacity=".2" stroke-width="1.200" />
              </pattern>
            </defs>
            <path d="M395 332L1034 410L1248 257V557H395z" fill="#d0d9d6" />
            <path d="M395 308L659 117L1248 189V257L1034 410L395 332z" fill="#dadae4" />
            <rect x="395" y="112" width="853" height="445" fill="url(#grid)" />
            <path d="M395 332L659 141L1248 213V257L1034 410z" fill="#8992a1" fill-opacity=".9" />
            <g stroke="#3c4656">
              <path d="M395 308L659 117L1248 189M395 308L1034 386L1248 233M659 117V141" />
              <path d="M659 141V435" stroke-opacity=".75" />
            </g>
            <path d="M659 364V435M659 435L490 557M659 435L1187 501L1248 507M1034 386V557" stroke="#5c6e6b" />
            <path d="M659 141L1248 213M395 332L659 141M1034 410L1248 257" stroke="#353b66" stroke-width="1.500" />
            <path d="M395 332L1034 410" stroke="#2f3562" stroke-width="2" />

            <!-- ring -->
            <path fill-rule="evenodd" d="M709 170L718 148L762 130L828 123L899 125L957 138L983 157V180L975 201L930 219L864 228L793 225L737 212L709 192zM800 172L837 167L873 168L902 173L888 179L855 183L819 182L792 176z" fill="#70716e" fill-opacity=".86" />
            <path d="M800 172L837 167L873 168L902 173L888 179L855 183L819 182L792 176z" fill="#9aa9ba" />
            <path d="M762 130L828 123L899 125L957 138L983 157L902 150L873 145L837 144L804 147L718 148z" fill="#aaa" fill-opacity=".3" />
            <g stroke="#3d3f3e" stroke-opacity=".7" stroke-linejoin="round">
              <path d="M709 170L718 148L762 130L828 123L899 125L957 138L983 157L975 178L930 196L864 205L793 201L737 188z" />
              <path d="M709 170V192L737 212L793 225L864 228L930 219L975 201L983 180V157M737 188V212M793 201V225M864 205V228M930 196V219M975 178V201" />
              <path d="M778 167L782 155L804 147L837 144L873 145L902 150L916 161L911 172L888 179L855 183L819 182L792 176z" />
              <path d="M778 167V189L792 200L819 206L855 207L888 202L911 194L916 182V161M792 176V200M819 182V206M855 183V207M888 179V202M911 172V194" />
              <path d="M804 147V170M837 144V167M873 145V168M902 150V173M782 155L778 189M792 176L804 170L837 167L873 168L902 173" stroke-opacity=".6" />
              <path d="M718 148V172M762 130V153M828 123V145M899 125V149M957 138V161" stroke-opacity=".6" />
              <path d="M709 192L717 173L762 153L828 145L899 149L957 161L975 178M718 148L820 160L975 179M762 130L820 135L983 157" stroke-opacity=".5" />
            </g>

            <!-- z axis -->
            <path d="M847 277V386" stroke="#7c3a42" stroke-width="1.500" />
            <path d="M846 143V255L847 277M847 386V557" stroke="#e01c22" stroke-width="2" />
            <path d="M841 145L846 131L851 145z" fill="#f01010" />

            <!-- scale -->
            <rect x="644.500" y="531.500" width="353" height="7" fill="#fff" stroke="#000" />
            <rect x="821" y="531" width="177" height="8" fill="#000" />
            <path d="M847 528V557" stroke="#e01c22" stroke-width="2" />
            <g fill="#111" font-family="'Liberation Sans', Arial, sans-serif" font-size="12">
              <text x="641" y="553">0</text>
              <text x="814" y="553">25</text>
              <text x="991" y="553">50 (mm)</text>
              <text x="846" y="131" font-size="11" fill="#e02020">Z</text>
            </g>

            <!-- triad -->
            <path d="M1187 501V475" stroke="#b03030" stroke-width="2" />
            <path d="M1182 477L1187 467L1191 477z" fill="#a82c2c" />
            <path d="M1187 501L1214 505" stroke="#2140b0" stroke-width="2" />
            <path d="M1213 501L1224 506L1212 509z" fill="#2140b0" />
            <path d="M1187 501L1176 509" stroke="#207040" stroke-width="1.500" />
            <circle cx="1176" cy="510" r="3" fill="#207a35" />
            <g font-family="'Liberation Sans', Arial, sans-serif" font-size="11" font-weight="bold">
              <text x="1186" y="463" fill="#c84040" font-weight="normal">Z</text>
              <text x="1228" y="507" fill="#2848c0">Y</text>
              <text x="1169" y="515" fill="#207a35">X</text>
            </g>
            <path d="M1240 557L1248 551V557z" fill="#fff" stroke="#888" />
          </svg>
        </section>

        <!-- view and snap tools -->
        <aside class="w-[30px] shrink-0 flex flex-col items-center pt-[3px] pr-[2px] bg-[#d9d9d9] [&>button]:w-[23px] [&>button]:h-5 [&>button]:flex [&>button]:items-center [&>button]:justify-center [&_svg]:size-4 [&_svg]:fill-none [&_svg]:stroke-[#777] [&>i]:w-[21px] [&>i]:h-[3px] [&>i]:bg-[repeating-linear-gradient(90deg,#222_0_1px,#bbb_1px_2px)]">
          <i class="mb-[3px]"></i>
          <button aria-label="Select behind"><svg viewBox="0 0 16 16"><path d="M2.500 2.500h8v8h-8zM5.500 5.500h8v8h-8zM5 5l5 5M7 10h3V7" /></svg></button>
          <button aria-label="Shaded"><svg viewBox="0 0 16 16"><path d="M3 5l5-2 5 2v6l-5 4-5-3z" fill="#777" /><path d="M3 5l5-2 5 2-5 2z" fill="#ddd" /></svg></button>
          <button aria-label="Wireframe"><svg viewBox="0 0 16 16"><path d="M3 5l6-2 4 2v6l-5 4-5-3z" fill="#eee" /><path d="M3 6l5 2v7M8 8l5-3" /><path d="M3 6l5-3v4z" fill="#777" /></svg></button>
          <i class="mt-[10px] mb-[3px]"></i>
          <button class="border border-[#334470] bg-[#e8e8ee]" aria-label="Snap to grid"><svg viewBox="0 0 16 16"><path d="M5 2v6M2 5h6" stroke="#000" stroke-width="1.500" /><path d="M12 2v12M2 12h13M9 5h6" stroke="#555" stroke-dasharray="1 2" /></svg></button>
          <button class="border border-t-0 border-[#334470] bg-[#e8e8ee]" aria-label="Snap to vertex"><svg viewBox="0 0 16 16"><path d="M2.500 4.500h12v8h-12z" fill="#ff2" stroke="#222" /><path d="M1 3h4v3H1z" fill="#000" /></svg></button>
          <button class="border border-t-0 border-[#334470] bg-[#e8e8ee]" aria-label="Snap to edge center"><svg viewBox="0 0 16 16"><path d="M2 9.500h12" stroke="#000" /><path d="M5 9l3-3 3 3z" fill="#000" /></svg></button>
          <button class="border border-t-0 border-[#334470] bg-[#e8e8ee]" aria-label="Snap to face center"><svg viewBox="0 0 16 16"><path d="M3.500 3.500h10v9h-10z" fill="#ff2" stroke="#222" /><circle cx="8.500" cy="8" r="2" fill="#000" /></svg></button>
          <button class="border border-t-0 border-[#334470] bg-[#e8e8ee]" aria-label="Snap to quadrant"><svg viewBox="0 0 16 16"><path d="M2 9.500h13" stroke="#000" /><path d="M3 7l5 1v3H4z" fill="#000" /></svg></button>
          <button aria-label="Snap to arc center"><svg viewBox="0 0 16 16"><path d="M5 13q-5-7 3-9" /><path d="M8 4q4-1 5 1" stroke="#cc3" /></svg></button>
        </aside>
      </div>

      <!-- message and progress docks -->
      <div class="h-[137px] shrink-0 flex border-t-2 border-[#444] [&_h2]:w-[13px] [&_h2]:border [&_h2]:border-[#999] [&_h2]:rounded-xs [&_h2]:flex [&_h2]:flex-col [&_h2]:items-center [&_h2]:justify-between [&_h2]:pt-[2px] [&_h2]:pb-[3px] [&_h2]:text-[9px] [&_h2]:leading-[11px] [&_h2_span]:[writing-mode:vertical-rl] [&_h2_span]:rotate-180">
        <section class="w-1/2 flex gap-[2px] pl-1 pr-[6px] pt-[2px] pb-[3px]">
          <h2>
            <div class="flex flex-col items-center gap-[3px]">
              <button class="block" aria-label="Close messages"><svg class="block w-[10px] h-2"><use href="#close" /></svg></button>
              <button class="block" aria-label="Collapse messages"><svg class="block w-[7px] h-[7px]"><use href="#left" /></svg></button>
            </div>
            <span>Message Manager</span>
          </h2>
          <div class="relative flex-1 mb-px bg-white border-2 border-[#222]">
            <span class="absolute -top-[2px] -right-[2px] w-[235px] h-[2px] bg-[#e4e4e4]"></span>
            <span class="absolute -top-[2px] -right-[2px] w-[2px] h-[16px] bg-[#e4e4e4]"></span>
          </div>
        </section>
        <section class="w-1/2 flex gap-[2px] ml-[3px] pl-[3px] pr-1 pt-[2px] pb-[3px] border-l-2 border-[#222]">
          <h2>
            <div class="flex flex-col items-center gap-[3px]">
              <button class="block" aria-label="Close progress"><svg class="block w-[10px] h-2"><use href="#close" /></svg></button>
              <button class="block" aria-label="Collapse progress"><svg class="block w-[7px] h-[7px]"><use href="#left" /></svg></button>
            </div>
            <span>Progress</span>
          </h2>
          <div class="flex-1 mb-px bg-white border-2 border-[#555] border-r-[#eee] border-b-[#eee]"></div>
        </section>
      </div>
    </main>
  </body>
</html>
